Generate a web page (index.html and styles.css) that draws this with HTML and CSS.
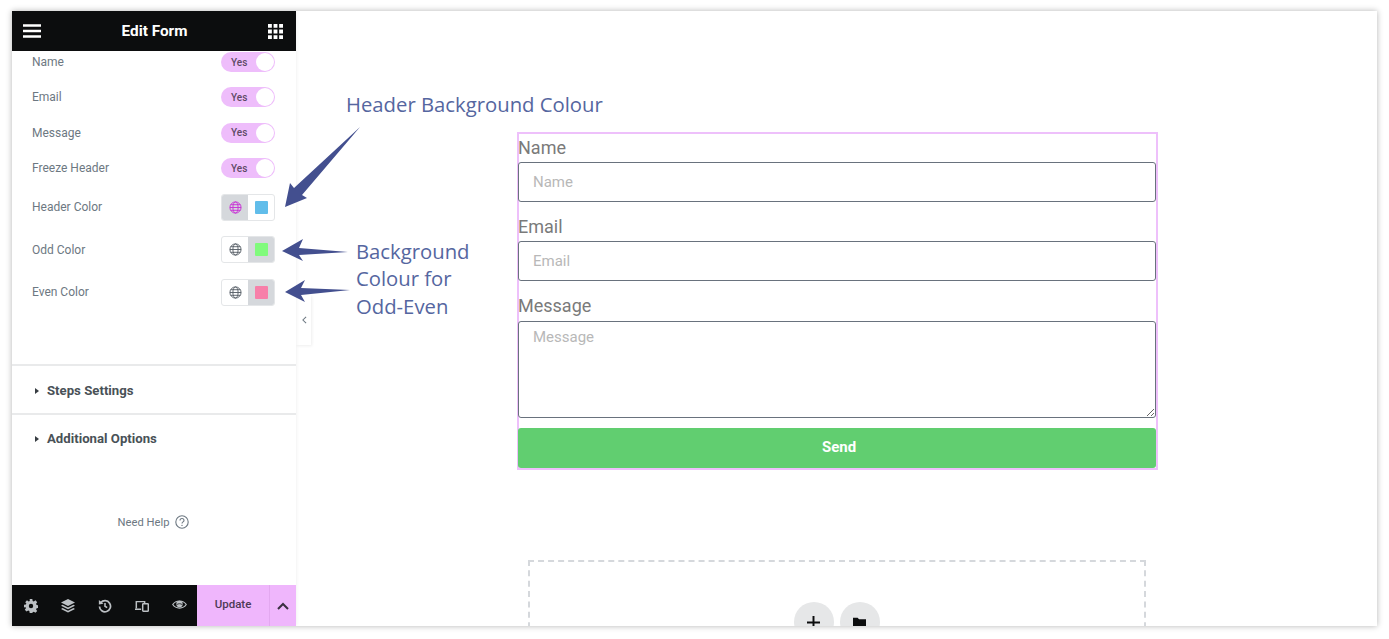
FILE: index.html
```html
<!DOCTYPE html>
<html lang="en">
<head>
<meta charset="utf-8">
<title>Edit Form</title>
<link rel="stylesheet" href="styles.css">
</head>
<body>
<div class="window">
  <aside class="panel">
    <header class="panel-head">
      <svg class="head-icon" viewBox="0 0 18 14"><path d="M0 1.500h18M0 7h18M0 12.500h18" stroke="#fff" stroke-width="2.600" fill="none"/></svg>
      <span class="panel-title">Edit Form</span>
      <svg class="head-icon grid-icon" viewBox="0 0 14 14"><path fill="#fff" d="M0 0h3.600v3.600H0zM5.200 0h3.600v3.600H5.200zM10.400 0H14v3.600h-3.600zM0 5.200h3.600v3.600H0zM5.200 5.200h3.600v3.600H5.200zM10.400 5.200H14v3.600h-3.600zM0 10.400h3.600V14H0zM5.200 10.400h3.600V14H5.200zM10.400 10.400H14V14h-3.600z"/></svg>
    </header>
    <div class="panel-body">
      <div class="controls">
        <div class="row"><span class="row-label">Name</span><span class="toggle"><span class="toggle-text">Yes</span><span class="knob"></span></span></div>
        <div class="row"><span class="row-label">Email</span><span class="toggle"><span class="toggle-text">Yes</span><span class="knob"></span></span></div>
        <div class="row"><span class="row-label">Message</span><span class="toggle"><span class="toggle-text">Yes</span><span class="knob"></span></span></div>
        <div class="row"><span class="row-label">Freeze Header</span><span class="toggle"><span class="toggle-text">Yes</span><span class="knob"></span></span></div>
        <div class="color-row color-row-first">
          <span class="row-label">Header Color</span>
          <span class="swatch-group">
            <span class="cell active"><svg class="globe globe-pink" viewBox="0 0 14 14"><use href="#globe"/></svg></span>
            <span class="cell"><span class="swatch blue"></span></span>
          </span>
        </div>
        <div class="color-row">
          <span class="row-label">Odd Color</span>
          <span class="swatch-group">
            <span class="cell"><svg class="globe" viewBox="0 0 14 14"><use href="#globe"/></svg></span>
            <span class="cell active"><span class="swatch green"></span></span>
          </span>
        </div>
        <div class="color-row">
          <span class="row-label">Even Color</span>
          <span class="swatch-group">
            <span class="cell"><svg class="globe" viewBox="0 0 14 14"><use href="#globe"/></svg></span>
            <span class="cell active"><span class="swatch pink"></span></span>
          </span>
        </div>
      </div>
      <div class="section"><span class="caret"></span>Steps Settings</div>
      <div class="section section-last"><span class="caret"></span>Additional Options</div>
      <div class="help">Need Help
        <svg class="help-icon" viewBox="0 0 14 14"><circle cx="7" cy="7" r="6.200" fill="none" stroke="#6d7882" stroke-width="1.100"/><path d="M5 5.400c0-2.600 4-2.600 4 0 0 1.500-2 1.500-2 3.100" fill="none" stroke="#6d7882" stroke-width="1.100"/><circle cx="7" cy="10.400" r=".7" fill="#6d7882"/></svg>
      </div>
    </div>
    <footer class="panel-foot">
      <div class="foot-tools">
        <svg class="tool" viewBox="0 0 16 16"><path fill="#bcc0c4" fill-rule="evenodd" d="M6.500 0h3l.4 2.200 1.300.6L13.100 1.500l2 2.100-1.300 1.900.6 1.300 2.100.4v3l-2.100.4-.6 1.300 1.300 1.900-2 2-1.900-1.200-1.300.5L9.500 16h-3l-.4-2.300-1.300-.5-1.900 1.200-2-2 1.300-1.900-.6-1.300L0 9.700v-3l2.100-.4.6-1.300L1.400 3.600l2-2.100 1.900 1.300 1.300-.6zM8 5.500a2.500 2.500 0 1 0 0 5 2.500 2.500 0 0 0 0-5z"/></svg>
        <svg class="tool" viewBox="0 0 16 16"><path fill="#bcc0c4" d="M8 0l8 4-8 4-8-4z"/><path fill="#bcc0c4" d="M1.800 6.500L8 9.600l6.200-3.100L16 7.700 8 11.700 0 7.700z"/><path fill="#bcc0c4" d="M1.800 10.300L8 13.400l6.200-3.100 1.800 1.200L8 15.500 0 11.500z"/></svg>
        <svg class="tool" viewBox="0 0 16 16"><path fill="none" stroke="#bcc0c4" stroke-width="2" d="M3.200 4.200A6.300 6.300 0 1 1 1.700 8.500"/><path fill="#bcc0c4" d="M1 1.200l5.300 4.300L1 6.300z"/><path fill="none" stroke="#bcc0c4" stroke-width="1.800" d="M8 4.500V8.300l2.500 1.500"/></svg>
        <svg class="tool" viewBox="0 0 16 16"><path fill="none" stroke="#bcc0c4" stroke-width="1.700" d="M1.500 10.500V3h9.500v1.500M0 11.800h7"/><rect x="8.800" y="5.500" width="6.400" height="8.500" rx=".8" fill="none" stroke="#bcc0c4" stroke-width="1.700"/></svg>
        <svg class="tool tool-eye" viewBox="0 0 16 11"><path fill="none" stroke="#bcc0c4" stroke-width="1.300" d="M.8 5.500c3.300-5 11.100-5 14.400 0-3.300 5-11.100 5-14.400 0z"/><circle cx="8" cy="5" r="3.400" fill="#bcc0c4"/><path d="M5 5.700c1.700-1.400 4.300-1.400 6 0" fill="none" stroke="#0c0d0e" stroke-width=".8"/></svg>
      </div>
      <button class="update" type="button">Update</button>
      <span class="update-more"><svg class="chev" viewBox="0 0 12 8"><path d="M1 7l5-5 5 5" fill="none" stroke="#3a2f40" stroke-width="2"/></svg></span>
    </footer>
  </aside>
  <main class="canvas">
    <form class="form">
      <label class="field-label">Name</label>
      <input class="field" placeholder="Name">
      <label class="field-label">Email</label>
      <input class="field" placeholder="Email">
      <label class="field-label field-label-tall">Message</label>
      <textarea class="field area" placeholder="Message"></textarea>
      <button class="send" type="button">Send</button>
    </form>
    <section class="dropzone">
      <span class="drop-btn"><svg class="drop-icon" viewBox="0 0 12 12"><path d="M6 0v12M0 6h12" stroke="#0c0d0e" stroke-width="1.800"/></svg></span>
      <span class="drop-btn"><svg class="drop-icon" viewBox="0 0 14 12"><path fill="#0c0d0e" d="M0 1h5l1.500 1.500H14V12H0z"/></svg></span>
    </section>
    <button class="collapse" type="button"><svg class="collapse-icon" viewBox="0 0 6 10"><path d="M5 1L1 5l4 4" fill="none" stroke="#6d7882" stroke-width="1.300"/></svg></button>
    <p class="note note-header">Header Background Colour</p>
    <p class="note note-odd">Background<br>Colour for<br>Odd-Even</p>
  </main>
  <svg class="arrows" viewBox="0 0 1365 615">
    <path fill="#434f8f" d="M273 196 L278 172 L282 177 L348 116 L290 184 L295 187z"/>
    <path fill="#434f8f" d="M270 240 L291 228 L287 237 L336 241 L287 244 L291 250z"/>
    <path fill="#434f8f" d="M273 281 L293 269 L289 277 L338 279 L289 284 L293 291z"/>
  </svg>
</div>
<svg class="defs" width="0" height="0">
  <defs>
    <g id="globe" fill="none" stroke="currentColor" stroke-width="1">
      <circle cx="7" cy="7" r="6"/>
      <ellipse cx="7" cy="7" rx="2.800" ry="6"/>
      <path d="M1 7h12M1.800 4h10.400M1.800 10h10.400"/>
    </g>
  </defs>
</svg>
</body>
</html>
```
FILE: styles.css
```css
* { box-sizing: border-box; }
html, body { margin: 0; height: 100%; background: #fff; overflow: hidden; }
body { padding: 11px 12px 13px; font-family: Roboto, "Liberation Sans", sans-serif; }

.window {
  position: relative;
  display: flex;
  height: 615px;
  width: 1365px;
  background: #fff;
  box-shadow: 0 0 6px rgba(0,0,0,.3);
  overflow: hidden;
}

.panel { width: 284px; flex: none; display: flex; flex-direction: column; background: #fff; box-shadow: 0 0 4px rgba(0,0,0,.08); position: relative; z-index: 1; }
.panel-head { height: 40px; flex: none; display: flex; align-items: center; justify-content: space-between; padding: 0 13px 0 11px; background: #0c0d0e; }
.head-icon { width: 18px; height: 14px; }
.grid-icon { width: 15px; height: 15px; }
.panel-title { color: #fff; font-size: 15.300px; font-weight: 700; }

.panel-body { flex: 1; display: flex; flex-direction: column; overflow: hidden; }
.controls { height: 315px; flex: none; border-bottom: 2px solid #e9eaeb; padding: 0 21px 0 20px; }
.row { height: 20px; margin-top: 15.500px; display: flex; align-items: center; justify-content: space-between; }
.row:first-child { height: 21px; margin-top: 0; align-items: flex-end; overflow: hidden; }
.row:first-child .row-label { align-self: center; }
.row:nth-child(2) { margin-top: 15px; }
.row-label { font-size: 12px; color: #6d7882; }
.toggle { width: 54px; height: 20px; flex: none; display: flex; align-items: center; justify-content: space-between; background: #eebdfb; border-radius: 10px; padding: 0 1px 0 10px; }
.toggle-text { font-size: 10px; color: #5e4a66; font-weight: 500; }
.knob { width: 18px; height: 18px; border-radius: 50%; background: #fff; }

.color-row { height: 28px; margin-top: 14.500px; display: flex; align-items: center; justify-content: space-between; }
.color-row-first { margin-top: 15px; }
.swatch-group { width: 54px; height: 27px; display: flex; border: 1px solid #e4e6e8; border-radius: 3px; overflow: hidden; background: #fff; }
.cell { flex: 1; display: flex; align-items: center; justify-content: center; }
.cell.active { background: #d5d8dc; }
.swatch { width: 13px; height: 13px; border-radius: 1px; }
.blue { background: #61bdea; }
.green { background: #80fb7c; }
.pink { background: #f77fa9; }
.globe { width: 13px; height: 13px; color: #555d66; }
.globe-pink { color: #c82fd6; }

.section { height: 49px; flex: none; display: flex; align-items: center; gap: 8px; padding: 2px 0 0 23px; border-bottom: 2px solid #e9eaeb; font-size: 13.200px; font-weight: 700; color: #495157; }
.section-last { height: 47px; padding-top: 0; border-bottom: 0; }
.caret { width: 0; height: 0; border-left: 4px solid #373d42; border-top: 3.500px solid transparent; border-bottom: 3.500px solid transparent; }
.help { margin-top: 53px; display: flex; align-items: center; justify-content: center; gap: 6px; font-size: 11.200px; color: #6d7882; padding-right: 1px; }
.help-icon { width: 14px; height: 14px; }

.panel-foot { height: 41px; flex: none; display: flex; background: #0c0d0e; }
.foot-tools { width: 185px; flex: none; display: flex; align-items: center; justify-content: space-between; padding: 0 10px 0 12px; }
.tool { width: 14px; height: 14px; }
.tool-eye { width: 15px; height: 11px; margin-top: -2px; }
.update { width: 73px; flex: none; border: 0; border-right: 1px solid #e3a8f0; background: #efb6fc; padding: 0 0 3px; font: 500 11.500px Roboto, sans-serif; color: #4d3a56; }
.update-more { flex: 1; display: flex; align-items: center; justify-content: center; background: #efb6fc; }
.chev { width: 12px; height: 8px; }

.canvas { flex: 1; position: relative; overflow: hidden; background: #fff; min-width: 0; padding-top: 121px; }
.form { width: 641px; height: 338px; margin-left: 221px; border: 2px solid #eec0fb; display: flex; flex-direction: column; }
.field-label { font-size: 18px; line-height: 21px; height: 26px; margin-left: -1px; color: #7a7a7a; padding-top: 1px; flex: none; }
.field-label:first-child { height: 28px; padding-top: 3px; }
.field-label-tall { height: 27px; }
.field { width: 638px; margin-left: -1px; height: 40px; flex: none; border: 1px solid #69727d; border-radius: 3px; padding: 0 14px; font: 15px Roboto, sans-serif; background: #fff; outline: 0; margin-bottom: 13px; color: #7a7a7a; }
.field::placeholder { color: #b8b8b8; opacity: 1; }
.area { height: 97px; padding-top: 6px; margin-bottom: 10px; resize: vertical; line-height: 18px; }
.send { width: 638px; margin-left: -1px; height: 40px; flex: none; border: 0; border-radius: 3px; background: #61ce70; color: #fff; font: 700 15px Roboto, sans-serif; padding: 0 0 2px 4px; }

.dropzone { width: 618px; height: 120px; margin: 90px 0 0 232px; border: 2px dashed #d5d8dc; display: flex; justify-content: center; gap: 6px; padding: 40px 1px 0 0; }
.drop-btn { width: 40px; height: 40px; flex: none; border-radius: 50%; background: #e6e7e8; display: flex; align-items: center; justify-content: center; }
.drop-icon { width: 13px; height: 13px; }

.collapse { position: absolute; left: 0; top: 284px; width: 15px; height: 50px; padding: 0 0 0 1px; border: 0; background: #fff; box-shadow: 1px 1px 3px rgba(0,0,0,.07); display: flex; align-items: center; justify-content: center; }
.collapse-icon { width: 5px; height: 8px; }

.note { position: absolute; margin: 0; font-family: "Open Sans", sans-serif; font-size: 20.300px; color: #5566a0; white-space: nowrap; }
.note-header { left: 50px; top: 79px; line-height: 28px; }
.note-odd { left: 60px; top: 227px; line-height: 27.300px; }
.arrows { position: absolute; left: 0; top: 0; width: 1365px; height: 615px; z-index: 2; pointer-events: none; }
.defs { position: absolute; }
```
